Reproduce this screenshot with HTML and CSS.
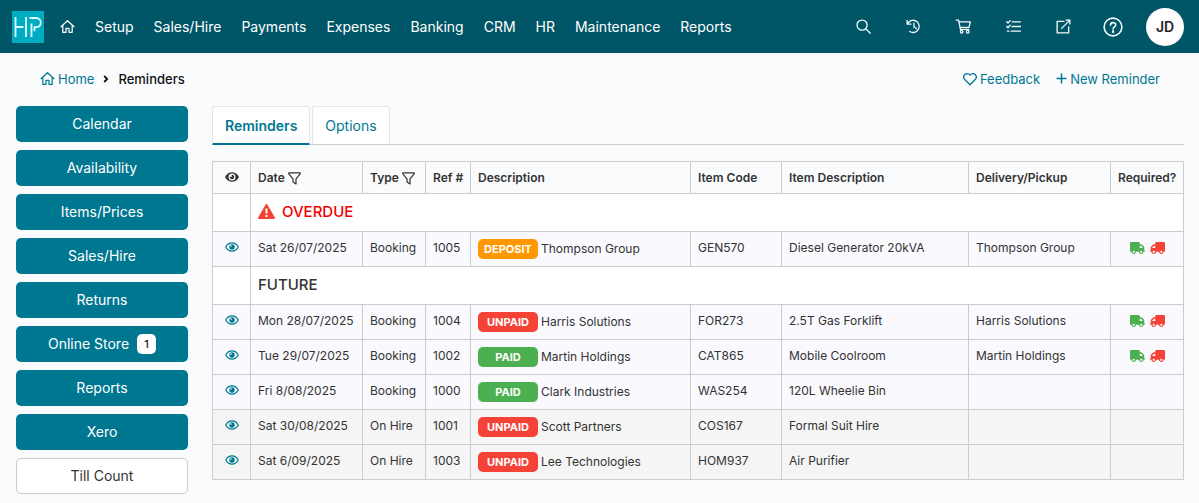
FILE: index.html
```html
<!DOCTYPE html>
<html lang="en">
<head>
<meta charset="utf-8">
<title>Reminders</title>
<link rel="stylesheet" href="styles.css">
</head>
<body>
<svg class="sprite" aria-hidden="true">
  <symbol id="house" viewBox="0 0 16 16"><path d="M1 8.2 8 1.8l7 6.4M3 6.8v7.4h3.4V10h3.2v4.2H13V6.8" fill="none" stroke="currentColor" stroke-width="1.3" stroke-linecap="round" stroke-linejoin="round"/></symbol>
  <symbol id="eye" viewBox="0 0 14 10"><path d="M.8 5C2.200 2.300 4.400.9 7 .9S11.800 2.300 13.200 5C11.800 7.700 9.600 9.100 7 9.100S2.200 7.700.8 5z" fill="none" stroke="currentColor" stroke-width="1.200"/><circle cx="7" cy="5" r="2.700" fill="currentColor"/><circle cx="6" cy="4" r=".8" fill="#fff"/></symbol>
  <symbol id="eye-solid" viewBox="0 0 14 10"><path d="M0 5C1.500 2 4 .3 7 .3S12.500 2 14 5C12.500 8 10 9.700 7 9.700S1.500 8 0 5z" fill="currentColor"/><circle cx="7" cy="5" r="3.500" fill="#fff"/><circle cx="7" cy="5" r="2.300" fill="currentColor"/><circle cx="6" cy="4" r="1" fill="#fff"/></symbol>
  <symbol id="filter" viewBox="0 0 13 13"><path d="M.8.8h11.400v1.100L8 6.800v5.200L5 9.900V6.800L.8 1.900z" fill="none" stroke="currentColor" stroke-width="1.200" stroke-linejoin="round"/></symbol>
  <symbol id="truck" viewBox="0 0 640 512"><path fill="currentColor" d="M48 0C21.500 0 0 21.500 0 48V368c0 26.500 21.500 48 48 48H64c0 53 43 96 96 96s96-43 96-96H384c0 53 43 96 96 96s96-43 96-96h32c17.700 0 32-14.300 32-32s-14.300-32-32-32V288 256 237.300c0-17-6.700-33.300-18.700-45.300L512 114.700c-12-12-28.300-18.700-45.300-18.700H416V48c0-26.500-21.500-48-48-48H48zM416 160h50.700L544 237.300V256H416V160zM112 416a48 48 0 1 1 96 0 48 48 0 1 1 -96 0zm368-48a48 48 0 1 1 0 96 48 48 0 1 1 0-96z"/></symbol>
</svg>

<header class="topbar">
  <a class="logo" href="#" aria-label="HP">
    <svg viewBox="0 0 32 32"><path d="M3.500 6v20M14 6v20M3.500 16h8M19.500 26V12.500M17.500 7h6.700a4.600 4.600 0 0 1 0 9.200H22.500v4" fill="none" stroke="#e4fbff" stroke-width="1.800"/></svg>
  </a>
  <nav class="mainnav" aria-label="Main">
    <a href="#" aria-label="Home"><svg class="icon"><use href="#house"/></svg></a>
    <a href="#">Setup</a>
    <a href="#">Sales/Hire</a>
    <a href="#">Payments</a>
    <a href="#">Expenses</a>
    <a href="#">Banking</a>
    <a href="#">CRM</a>
    <a href="#">HR</a>
    <a href="#">Maintenance</a>
    <a href="#">Reports</a>
  </nav>
  <div class="tools">
    <button type="button" aria-label="Search"><svg class="icon" viewBox="0 0 16 16"><circle cx="6.500" cy="6.500" r="5.400"/><path d="m10.400 10.400 4.800 4.800"/></svg></button>
    <button type="button" aria-label="History"><svg class="icon" viewBox="0 0 16 16"><path d="M1.200 1.500v4h4M1.600 5.300A6.500 6.500 0 1 1 4 13.300M8.500 4.500v4l2.600 1.700"/></svg></button>
    <button type="button" aria-label="Cart"><svg class="icon cart" viewBox="0 0 17 16"><path d="M.7 1.200h2.500l2 9.800h9M3.600 3h12.200l-1.500 6H4.900"/><circle cx="6.500" cy="13.600" r="1.400"/><circle cx="13" cy="13.600" r="1.400"/></svg></button>
    <button type="button" aria-label="Tasks"><svg class="icon" viewBox="0 0 16 16"><path d="M6.500 3h9M6.500 8h9M5.500 13h10M.8 3l1.300 1.300L4.500 1.700M.8 8l1.300 1.300 2.400-2.600M1.500 13h1.600"/></svg></button>
    <button type="button" aria-label="Open"><svg class="icon" viewBox="0 0 16 16"><path d="M8.500 2.500H1.200v12.300h12.300V8.500M10.800 1.200h4v4M14.500 1.500 6 10"/></svg></button>
    <button type="button" aria-label="Help"><svg class="help" viewBox="0 0 20 20"><circle cx="10" cy="10" r="8.900"/><path d="M7.500 8.200c0-3.400 5.200-3.300 5.200-.3 0 2-2.600 1.900-2.600 4"/><path d="M10.100 14v1.300" stroke-width="2"/></svg></button>
    <button type="button" class="avatar">JD</button>
  </div>
</header>

<div class="crumbbar">
  <nav class="crumbs" aria-label="Breadcrumb">
    <a href="#"><svg class="icon"><use href="#house"/></svg>Home</a>
    <svg class="chevron" viewBox="0 0 6 8"><path d="m1.200 1 3 3-3 3" fill="none" stroke="currentColor" stroke-width="1.800"/></svg>
    <span>Reminders</span>
  </nav>
  <div class="actions">
    <a href="#"><svg class="icon" viewBox="0 0 16 16"><path d="M8 14.500 2 8.600C-1.500 4.800 4-1 8 3.500c4-4.500 9.500 1.300 6 5.100z" fill="none" stroke="currentColor" stroke-width="1.500" stroke-linejoin="round"/></svg>Feedback</a>
    <a href="#"><svg class="plus" viewBox="0 0 11 11"><path d="M5.500.5v10M.5 5.500h10" stroke="currentColor" stroke-width="1.500"/></svg>New Reminder</a>
  </div>
</div>

<div class="layout">
  <nav class="side" aria-label="Shortcuts">
    <a href="#">Calendar</a>
    <a href="#">Availability</a>
    <a href="#">Items/Prices</a>
    <a href="#">Sales/Hire</a>
    <a href="#">Returns</a>
    <a href="#">Online Store <span class="count">1</span></a>
    <a href="#">Reports</a>
    <a href="#">Xero</a>
    <a href="#" class="plain">Till Count</a>
  </nav>

  <main class="main">
    <div class="tabs" role="tablist">
      <button type="button" role="tab" aria-selected="true" class="active">Reminders</button>
      <button type="button" role="tab" aria-selected="false">Options</button>
    </div>
    <table class="grid">
      <colgroup><col class="c-eye"><col class="c-date"><col class="c-type"><col class="c-ref"><col><col class="c-code"><col class="c-item"><col class="c-delivery"><col class="c-required"></colgroup>
      <thead>
        <tr>
          <th class="mid" aria-label="View"><svg class="eye"><use href="#eye-solid"/></svg></th>
          <th>Date <svg class="filter"><use href="#filter"/></svg></th>
          <th>Type <svg class="filter"><use href="#filter"/></svg></th>
          <th>Ref #</th><th>Description</th><th>Item Code</th><th>Item Description</th><th>Delivery/Pickup</th><th>Required?</th>
        </tr>
      </thead>
      <tbody>
        <tr class="group overdue"><td></td><td colspan="8"><div class="heading"><svg class="warn" viewBox="0 0 17 15"><path d="M8.500 1 16 14H1z" fill="#f44336" stroke="#f44336" stroke-width="2" stroke-linejoin="round"/><path d="M8.500 4.500v5M8.500 11v2" stroke="#fff" stroke-width="2"/></svg>OVERDUE</div></td></tr>
        <tr><td class="mid"><a href="#" aria-label="View 1005"><svg class="eye"><use href="#eye"/></svg></a></td><td>Sat 26/07/2025</td><td>Booking</td><td>1005</td><td class="party"><div class="desc"><span class="badge deposit">DEPOSIT</span>Thompson Group</div></td><td>GEN570</td><td>Diesel Generator 20kVA</td><td>Thompson Group</td><td class="mid"><svg class="truck out"><use href="#truck"/></svg><svg class="truck back"><use href="#truck"/></svg></td></tr>
        <tr class="group"><td></td><td colspan="8"><div class="heading">FUTURE</div></td></tr>
        <tr><td class="mid"><a href="#" aria-label="View 1004"><svg class="eye"><use href="#eye"/></svg></a></td><td>Mon 28/07/2025</td><td>Booking</td><td>1004</td><td class="party"><div class="desc"><span class="badge unpaid">UNPAID</span>Harris Solutions</div></td><td>FOR273</td><td>2.5T Gas Forklift</td><td>Harris Solutions</td><td class="mid"><svg class="truck out"><use href="#truck"/></svg><svg class="truck back"><use href="#truck"/></svg></td></tr>
        <tr><td class="mid"><a href="#" aria-label="View 1002"><svg class="eye"><use href="#eye"/></svg></a></td><td>Tue 29/07/2025</td><td>Booking</td><td>1002</td><td class="party"><div class="desc"><span class="badge paid">PAID</span>Martin Holdings</div></td><td>CAT865</td><td>Mobile Coolroom</td><td>Martin Holdings</td><td class="mid"><svg class="truck out"><use href="#truck"/></svg><svg class="truck back"><use href="#truck"/></svg></td></tr>
        <tr><td class="mid"><a href="#" aria-label="View 1000"><svg class="eye"><use href="#eye"/></svg></a></td><td>Fri 8/08/2025</td><td>Booking</td><td>1000</td><td class="party"><div class="desc"><span class="badge paid">PAID</span>Clark Industries</div></td><td>WAS254</td><td>120L Wheelie Bin</td><td></td><td></td></tr>
        <tr class="hire"><td class="mid"><a href="#" aria-label="View 1001"><svg class="eye"><use href="#eye"/></svg></a></td><td>Sat 30/08/2025</td><td>On Hire</td><td>1001</td><td class="party"><div class="desc"><span class="badge unpaid">UNPAID</span>Scott Partners</div></td><td>COS167</td><td>Formal Suit Hire</td><td></td><td></td></tr>
        <tr class="hire"><td class="mid"><a href="#" aria-label="View 1003"><svg class="eye"><use href="#eye"/></svg></a></td><td>Sat 6/09/2025</td><td>On Hire</td><td>1003</td><td class="party"><div class="desc"><span class="badge unpaid">UNPAID</span>Lee Technologies</div></td><td>HOM937</td><td>Air Purifier</td><td></td><td></td></tr>
      </tbody>
    </table>
  </main>
</div>
</body>
</html>
```
FILE: styles.css
```css
* { box-sizing: border-box; }
body { margin: 0; background: #fafbfd; color: #333; font: 13px/20px Inter, sans-serif; }
a { color: #007791; text-decoration: none; }
button { font: inherit; border: 0; padding: 0; cursor: pointer; }
svg { flex: none; }
.sprite { display: none; }
.icon { width: 15px; height: 15px; }

.topbar { display: flex; align-items: center; height: 53px; padding: 0 15px 0 12px; background: #005566; }
.logo { display: flex; width: 32px; height: 32px; margin-right: 16px; background: #00acc1; }
.mainnav { display: flex; align-items: center; gap: 20px; font-size: 14px; }
.mainnav a { display: flex; color: #fff; }
.tools { display: flex; align-items: center; margin-left: auto; }
.tools button { display: flex; align-items: center; justify-content: center; width: 50px; height: 38px; background: none; }
.tools svg { fill: none; stroke: #f2fbfc; stroke-width: 1.4; stroke-linecap: round; stroke-linejoin: round; }
.tools .cart { width: 17px; }
.tools .help { width: 20px; height: 20px; stroke-width: 1.6; }
.tools .avatar { width: 38px; margin-left: 8px; border-radius: 50%; background: #fff; color: #222; font-size: 14px; font-weight: 600; }

.crumbbar { display: flex; justify-content: space-between; height: 53px; padding: 0 39px 2px 40px; align-items: center; }
.crumbs, .crumbs a, .actions, .actions a { display: flex; align-items: center; }
.crumbs { gap: 9px; color: #111; font-weight: 500; }
.crumbs a { gap: 3px; font-weight: 400; }
.chevron { width: 6px; height: 8px; }
.actions { gap: 16px; }
.actions a { gap: 3px; }
.actions .icon { width: 14px; height: 14px; }
.plus { width: 11px; height: 11px; }

.layout { display: grid; grid-template-columns: 172px 1fr; gap: 24px; padding: 0 15px 8px 16px; align-items: start; }
.side { display: grid; gap: 8px; }
.side a { display: flex; align-items: center; justify-content: center; gap: 8px; height: 36px; border-radius: 5px; background: #007791; color: #fff; font-size: 14px; }
.side .plain { border: 1px solid #ccc; background: #fff; color: #333; }
.count { width: 19px; border-radius: 5px; background: #fff; color: #222; font-size: 11px; font-weight: 500; text-align: center; }

.tabs { display: flex; gap: 2px; border-bottom: 1px solid #ccc; margin-bottom: 16px; }
.tabs button { height: 39px; margin-bottom: -1px; padding: 0 12px; border: 1px solid #e2e5e7; border-bottom-color: #ccc; border-radius: 3px 3px 0 0; background: #fff; color: #007791; font-size: 14px; }
.tabs .active { padding-top: 1px; border-bottom: 2px solid #007791; font-weight: 600; }

.grid { width: 100%; table-layout: fixed; border-collapse: collapse; background: #fff; }
.c-eye { width: 38px; }
.c-date { width: 112px; }
.c-type { width: 63px; }
.c-ref { width: 45px; }
.c-code { width: 91px; }
.c-item { width: 187px; }
.c-delivery { width: 142px; }
.c-required { width: 73px; }
th, td { border: 1px solid #ccc; text-align: left; white-space: nowrap; font-size: 12px; }
th { height: 32px; padding: 0 7px; background: #fafbfd; font-weight: 600; }
td { height: 35px; padding: 0 7px 3px; background: #f9f9fe; }
td.party { padding-bottom: 0; }
.hire td { background: #f5f5f5; }
.group td { height: 38px; background: #fff; }
.grid .mid { text-align: center; }
.heading { display: flex; align-items: center; gap: 7px; font-size: 15px; font-weight: 500; }
.group .heading { padding-top: 1px; }
.overdue .heading { color: #f00000; }
.warn { width: 17px; height: 15px; }
.eye { width: 14px; height: 10px; }
.filter { width: 13px; height: 13px; vertical-align: middle; }
.truck { width: 15px; height: 12px; vertical-align: middle; }
.out { color: #4caf50; margin-right: 5px; }
.back { color: #f44336; transform: scaleX(-1); }
.desc { display: flex; align-items: center; gap: 3px; }
.badge { width: 60px; border-radius: 5px; color: #fff; font-size: 11px; font-weight: 700; text-align: center; }
.deposit { background: #ff9800; }
.unpaid { background: #f44336; }
.paid { background: #4caf50; }
```
